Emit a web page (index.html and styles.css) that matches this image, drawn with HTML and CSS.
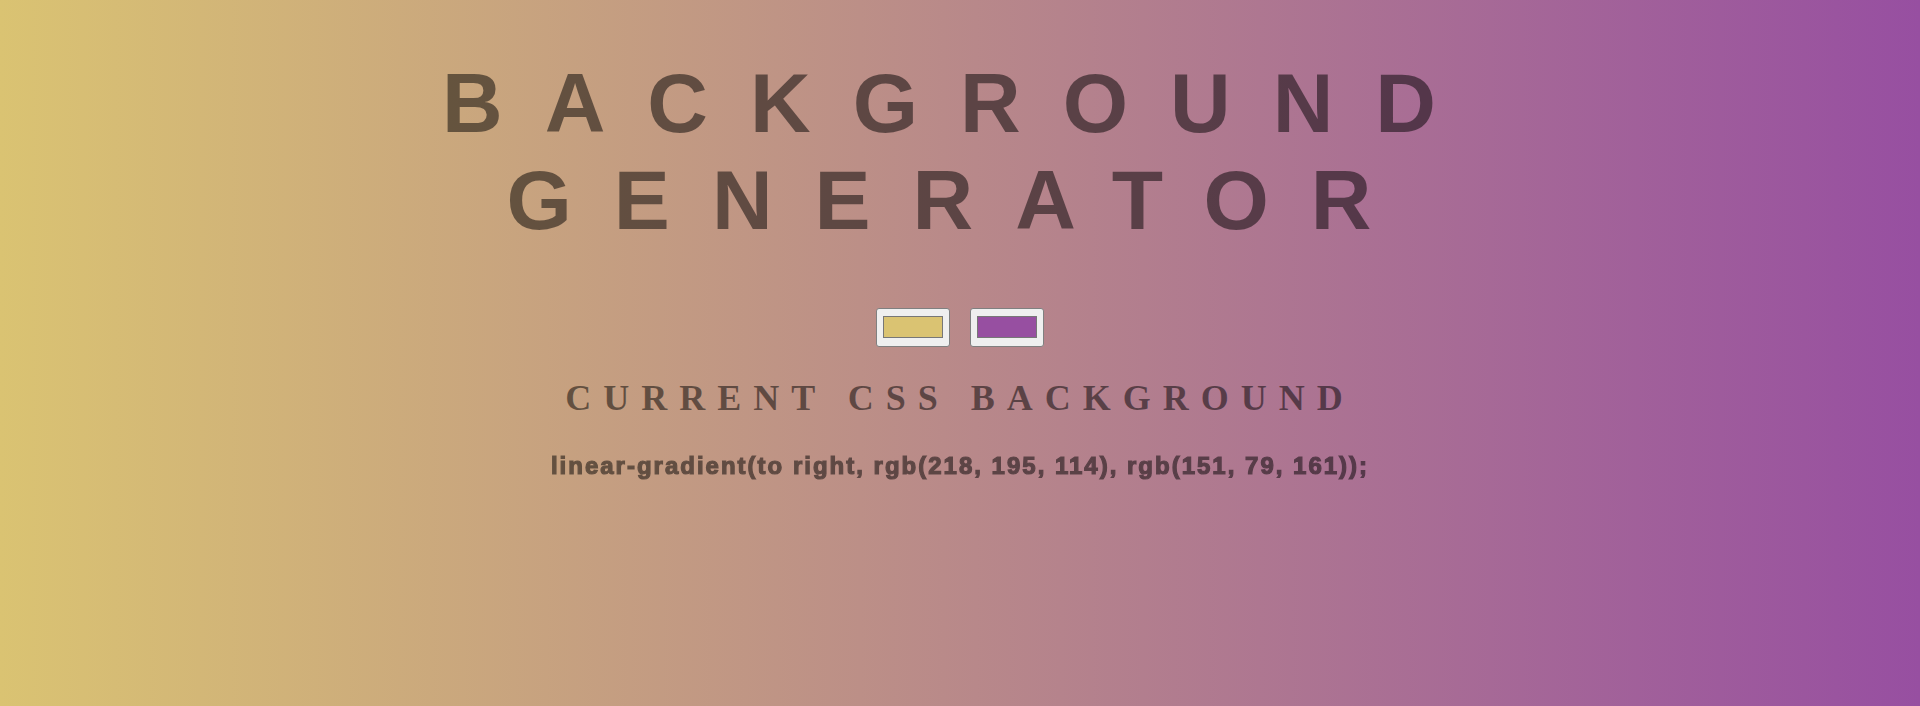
FILE: index.html
```html
<!DOCTYPE html>
<html lang="en">
<head>
<meta charset="utf-8">
<title>Background Generator</title>
<link rel="stylesheet" href="styles.css">
</head>
<body class="page">
  <h1 class="title">Background Generator</h1>
  <div class="pickers">
    <input class="picker" type="color" name="color1" value="#dac372">
    <input class="picker" type="color" name="color2" value="#974fa1">
  </div>
  <h3 class="subtitle">Current CSS Background</h3>
  <h3 class="code">linear-gradient(to right, rgb(218, 195, 114), rgb(151, 79, 161));</h3>
</body>
</html>
```
FILE: styles.css
```css
html {
  height: 100%;
}

.page {
  margin: 0;
  min-height: 100%;
  background: linear-gradient(to right, rgb(218, 195, 114), rgb(151, 79, 161));
  color: rgba(0, 0, 0, 0.5);
  text-align: center;
  display: flex;
  flex-direction: column;
  align-items: center;
}

.title {
  margin: 55px 0 0;
  font-family: "Liberation Sans", Arial, sans-serif;
  font-weight: 700;
  font-size: 84px;
  line-height: normal;
  letter-spacing: 42px;
  text-transform: uppercase;
  width: 100%;
}

.pickers {
  display: flex;
  justify-content: center;
  gap: 20px;
  margin-top: 59px;
}

.picker {
  -webkit-appearance: none;
  appearance: none;
  box-sizing: border-box;
  width: 74px;
  height: 39px;
  padding: 0;
  margin: 0;
  border: 1px solid #808080;
  border-radius: 3px;
  background: #efefef;
  cursor: pointer;
}

.picker::-webkit-color-swatch-wrapper {
  padding: 7px 6px 8px 6px;
}

.picker::-webkit-color-swatch {
  border: 1px solid #777;
  border-radius: 0;
}

.subtitle {
  margin: 30px 0 0;
  font-family: "Liberation Serif", "Times New Roman", serif;
  font-weight: 700;
  font-size: 36px;
  line-height: normal;
  letter-spacing: 12px;
  text-transform: uppercase;
}

.code {
  margin: 33px 0 0;
  font-family: "Liberation Sans", Arial, sans-serif;
  font-weight: 700;
  font-size: 24px;
  line-height: normal;
  letter-spacing: 2px;
  color: #000;
  -webkit-text-stroke: 1.2px #000;
  filter: opacity(0.5);
}
```
